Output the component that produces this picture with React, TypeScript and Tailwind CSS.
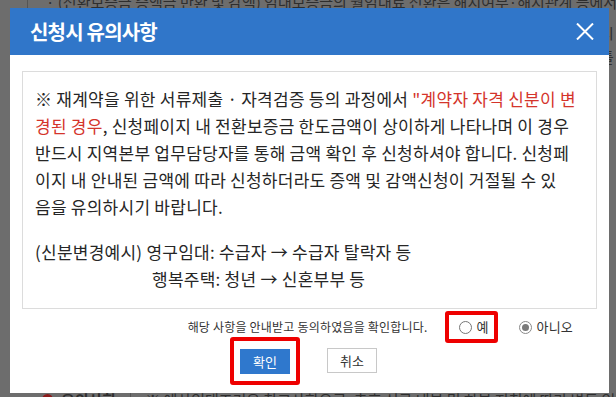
import React from 'react';

function Radio({ checked }: { checked?: boolean }) {
  return checked ? (
    <span className="flex h-[13px] w-[13px] items-center justify-center rounded-full border border-[#8a8a8a] bg-white">
      <span className="h-[7px] w-[7px] rounded-full bg-[#7a7a7a]" />
    </span>
  ) : (
    <span className="h-[13px] w-[13px] rounded-full border border-[#767676] bg-white" />
  );
}

export default function App() {
  return (
    <div className="relative h-[397px] w-[616px] overflow-hidden bg-[#6d6d6d] font-['Noto_Sans_CJK_KR',sans-serif]">
      {/* Page underneath the overlay */}
      <div className="absolute left-[27px] top-0 h-[12px] w-px bg-[#555]" />
      <div className="absolute left-[46px] top-[-9px] whitespace-nowrap text-[15px] text-[#2e2e2e]">
        · (전환보증금 증액금 반환 및 감액) 임대보증금의 월임대료 전환은 해지여부·해지관계 등에서 문제가 없고 보이게
      </div>
      <div className="absolute left-[600px] top-[22px] whitespace-nowrap text-[15px] text-[#2e2e2e]">시 등</div>
      <div className="absolute left-[600px] top-[46px] whitespace-nowrap text-[15px] text-[#2e2e2e]">틀 등</div>
      <div className="absolute bottom-[-14px] left-[42px] flex items-center whitespace-nowrap text-[15px] text-[#2e2e2e]">
        <span className="mr-[8px] h-[11px] w-[11px] rounded-full bg-[#8b1a1a]" />
        <span className="font-bold">유의사항</span>
        <span className="mx-[14px] h-[18px] w-px bg-[#555]" />
        <span>※ 예산임대조건은 참고사항으로, 추후 신규 내부 및 하부 지침에 따라 변동 임대료로 납부하여야</span>
      </div>

      {/* Dialog */}
      <div className="absolute left-[10px] top-[8px] flex w-[599px] flex-col bg-white pb-[19px]">
        <div className="flex h-[47px] items-center justify-between bg-[#3076c9] pl-[20px] pr-[15px]">
          <h2 className="text-[20px] font-bold tracking-[-0.8px] text-white">신청시 유의사항</h2>
          <svg width="18" height="17" viewBox="0 0 18 17" fill="none" stroke="white" strokeWidth="2">
            <path d="M1 0.5 L17 16.5 M17 0.5 L1 16.5" />
          </svg>
        </div>

        <div className="px-[12px] pt-[16px]">
          <div className="h-[238px] border border-[#dcdcdc] pl-[12px] pt-[13px] text-[17px] leading-[27px] tracking-[0.25px] text-[#262626] whitespace-nowrap">
            <p>
              ※ 재계약을 위한 서류제출 · 자격검증 등의 과정에서{' '}
              <span className="text-[#d4342b]">"계약자 자격 신분이 변</span>
            </p>
            <p>
              <span className="text-[#d4342b]">경된 경우</span>, 신청페이지 내 전환보증금 한도금액이 상이하게 나타나며 이 경우
            </p>
            <p>반드시 지역본부 업무담당자를 통해 금액 확인 후 신청하셔야 합니다. 신청페</p>
            <p>이지 내 안내된 금액에 따라 신청하더라도 증액 및 감액신청이 거절될 수 있</p>
            <p>음을 유의하시기 바랍니다.</p>
            <p className="mt-[18px]">(신분변경예시) 영구임대: 수급자 → 수급자 탈락자 등</p>
            <p className="pl-[117px]">행복주택: 청년 → 신혼부부 등</p>
          </div>
        </div>

        <div className="mt-[2px] flex h-[32px] items-center justify-end pr-[36px] text-[12px] tracking-[0.2px] text-[#333]">
          <span>해당 사항을 안내받고 동의하였음을 확인합니다.</span>
          <label className="ml-[17px] flex h-[32px] w-[53px] items-center gap-[5px] rounded-[3px] border-4 border-[#ee0000] pl-[10px] text-[13px]">
            <Radio />
            <span>예</span>
          </label>
          <label className="ml-[21px] flex items-center gap-[5px] text-[13px]">
            <Radio checked />
            <span>아니오</span>
          </label>
        </div>

        <div className="mt-[5px] flex justify-center gap-[37px] pr-[2px]">
          <div className="relative">
            <span className="absolute -inset-x-[10px] -bottom-[11px] -top-[11px] rounded-[3px] border-4 border-[#ee0000]" />
            <button className="relative h-[25px] w-[50px] bg-[#2f78cd] text-[13px] text-white">확인</button>
          </div>
          <button className="h-[25px] w-[50px] border border-[#c8c8c8] bg-white text-[13px] text-[#333]">취소</button>
        </div>
      </div>
    </div>
  );
}
